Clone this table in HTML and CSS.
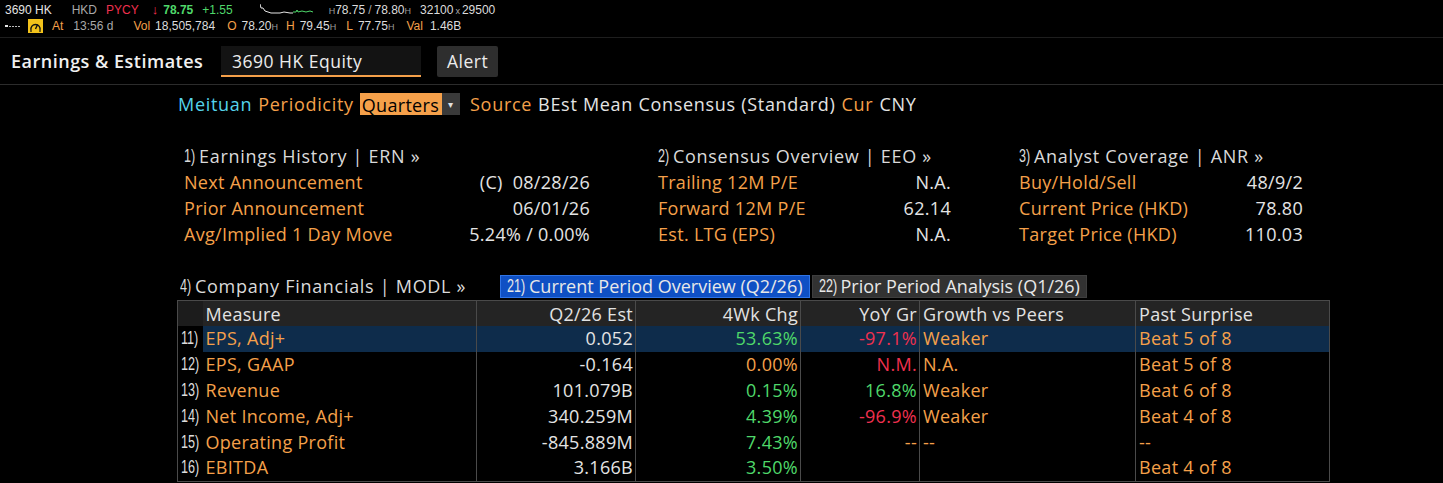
FILE: index.html
```html
<!DOCTYPE html>
<html>
<head>
<meta charset="utf-8">
<title>Earnings &amp; Estimates</title>
<link rel="stylesheet" href="styles.css">
</head>
<body>
<div class="topbar">
  <div class="tline">
    <span class="wh">3690 HK</span>
    <span class="gy m20">HKD</span>
    <span class="rd m9">PYCY</span>
    <span class="rd m13 arrow">&#8595;</span>
    <span class="gn bold m5">78.75</span>
    <span class="gn m9">+1.55</span>
    <svg class="spark m27" width="54" height="14" viewBox="0 0 54 14">
      <polyline points="0,1 1,5 3,5 5,8 8,9 11,10 20,10 24,9 30,10 33,10" fill="none" stroke="#e6e6e6" stroke-width="1"/>
      <polyline points="33,9 36,9 37,7 38,9 42,8 46,9 50,8 53,9" fill="none" stroke="#4fdb6b" stroke-width="1"/>
    </svg>
    <span class="gy m15"><span class="sm">H</span><span class="lt">78.75</span><span class="sep">/</span><span class="lt">78.80</span><span class="sm">H</span></span>
    <span class="lt m9">32100<span class="smx">x</span>29500</span>
  </div>
  <div class="tline">
    <svg class="dots" width="16" height="6" viewBox="0 0 16 6">
      <rect x="0" y="2" width="3" height="2" fill="#e6e6e6"/>
      <rect x="4" y="3" width="2" height="1" fill="#bbbbbb"/>
      <rect x="7" y="3" width="2" height="1" fill="#bbbbbb"/>
      <rect x="10" y="3" width="2" height="1" fill="#bbbbbb"/>
      <rect x="13" y="3" width="2" height="1" fill="#bbbbbb"/>
    </svg>
    <svg class="gauge m7" width="15" height="14" viewBox="0 0 15 14">
      <rect x="0" y="0" width="15" height="14" fill="#f2c21b"/>
      <path d="M3 11 A4.6 4.6 0 1 1 12 11" fill="none" stroke="#111" stroke-width="1.4"/>
      <line x1="7.5" y1="10" x2="9.6" y2="5.5" stroke="#111" stroke-width="1.4"/>
      <line x1="3" y1="11" x2="3" y2="13" stroke="#111" stroke-width="1.2"/>
      <line x1="12" y1="11" x2="12" y2="13" stroke="#111" stroke-width="1.2"/>
    </svg>
    <span class="or m9">At</span>
    <span class="gy m10">13:56 d</span>
    <span class="or m20">Vol</span>
    <span class="lt m5">18,505,784</span>
    <span class="or m12">O</span>
    <span class="lt m5">78.20<span class="sm">H</span></span>
    <span class="or m8">H</span>
    <span class="lt m5">79.45<span class="sm">H</span></span>
    <span class="or m10">L</span>
    <span class="lt m5">77.75<span class="sm">H</span></span>
    <span class="or m12">Val</span>
    <span class="lt m7">1.46B</span>
  </div>
</div>

<div class="header">
  <div class="title">Earnings &amp; Estimates</div>
  <div class="ticker">3690 HK Equity</div>
  <div class="btn">Alert</div>
</div>

<div class="content">
  <div class="meta">
    <span class="cy">Meituan</span>
    <span class="or">Periodicity</span>
    <span class="select"><span class="selval">Quarters</span><span class="caret">&#9662;</span></span>
    <span class="or sp">Source</span>
    <span class="wh">BEst Mean Consensus (Standard)</span>
    <span class="or">Cur</span>
    <span class="wh">CNY</span>
  </div>

  <div class="sections">
    <div class="sec s1">
      <div class="shead"><span class="num n1">1)</span>Earnings History | ERN &raquo;</div>
      <div class="srow"><span class="or">Next Announcement</span><span class="wh pre">(C)  08/28/26</span></div>
      <div class="srow"><span class="or">Prior Announcement</span><span class="wh">06/01/26</span></div>
      <div class="srow"><span class="or">Avg/Implied 1 Day Move</span><span class="wh">5.24% / 0.00%</span></div>
    </div>
    <div class="sec s2">
      <div class="shead"><span class="num n1">2)</span>Consensus Overview | EEO &raquo;</div>
      <div class="srow"><span class="or">Trailing 12M P/E</span><span class="wh">N.A.</span></div>
      <div class="srow"><span class="or">Forward 12M P/E</span><span class="wh">62.14</span></div>
      <div class="srow"><span class="or">Est. LTG (EPS)</span><span class="wh">N.A.</span></div>
    </div>
    <div class="sec s3">
      <div class="shead"><span class="num n1">3)</span>Analyst Coverage | ANR &raquo;</div>
      <div class="srow"><span class="or">Buy/Hold/Sell</span><span class="wh">48/9/2</span></div>
      <div class="srow"><span class="or">Current Price (HKD)</span><span class="wh">78.80</span></div>
      <div class="srow"><span class="or">Target Price (HKD)</span><span class="wh">110.03</span></div>
    </div>
  </div>

  <div class="finhead">
    <div class="fintitle"><span class="num n1">4)</span>Company Financials | MODL &raquo;</div>
    <div class="tab active"><span class="num n2">21)</span>Current Period Overview (Q2/26)</div>
    <div class="tab"><span class="num n2">22)</span>Prior Period Analysis (Q1/26)</div>
  </div>

  <table class="fin">
    <colgroup>
      <col class="c0"><col class="c1"><col class="c2"><col class="c3"><col class="c4"><col class="c5"><col class="c6">
    </colgroup>
    <thead>
      <tr>
        <th class="n"></th>
        <th class="l">Measure</th>
        <th class="r">Q2/26 Est</th>
        <th class="r">4Wk Chg</th>
        <th class="r">YoY Gr</th>
        <th class="l">Growth vs Peers</th>
        <th class="l">Past Surprise</th>
      </tr>
    </thead>
    <tbody>
      <tr class="hl">
        <td class="n"><span class="num">11)</span></td>
        <td class="l or">EPS, Adj+</td>
        <td class="r wh">0.052</td>
        <td class="r gn">53.63%</td>
        <td class="r rd">-97.1%</td>
        <td class="l or">Weaker</td>
        <td class="l or">Beat 5 of 8</td>
      </tr>
      <tr>
        <td class="n"><span class="num">12)</span></td>
        <td class="l or">EPS, GAAP</td>
        <td class="r wh">-0.164</td>
        <td class="r or">0.00%</td>
        <td class="r rd">N.M.</td>
        <td class="l or">N.A.</td>
        <td class="l or">Beat 5 of 8</td>
      </tr>
      <tr>
        <td class="n"><span class="num">13)</span></td>
        <td class="l or">Revenue</td>
        <td class="r wh">101.079B</td>
        <td class="r gn">0.15%</td>
        <td class="r gn">16.8%</td>
        <td class="l or">Weaker</td>
        <td class="l or">Beat 6 of 8</td>
      </tr>
      <tr>
        <td class="n"><span class="num">14)</span></td>
        <td class="l or">Net Income, Adj+</td>
        <td class="r wh">340.259M</td>
        <td class="r gn">4.39%</td>
        <td class="r rd">-96.9%</td>
        <td class="l or">Weaker</td>
        <td class="l or">Beat 4 of 8</td>
      </tr>
      <tr>
        <td class="n"><span class="num">15)</span></td>
        <td class="l or">Operating Profit</td>
        <td class="r wh">-845.889M</td>
        <td class="r gn">7.43%</td>
        <td class="r or">--</td>
        <td class="l or">--</td>
        <td class="l or">--</td>
      </tr>
      <tr>
        <td class="n"><span class="num">16)</span></td>
        <td class="l or">EBITDA</td>
        <td class="r wh">3.166B</td>
        <td class="r gn">3.50%</td>
        <td class="r"></td>
        <td class="l"></td>
        <td class="l or">Beat 4 of 8</td>
      </tr>
    </tbody>
  </table>
</div>
</body>
</html>
```

FILE: styles.css
```css
html, body {
  margin: 0;
  padding: 0;
  background: #000;
  height: 483px;
  overflow: hidden;
}
body {
  font-family: "Liberation Sans", Arial, sans-serif;
  color: #e6e6e6;
}

.wh { color: #e4e4e4; }
.lt { color: #dcdcdc; }
.gy { color: #a9a9a9; }
.or { color: #f5a04a; }
.rd { color: #f0304f; }
.gn { color: #4fd86a; }
.cy { color: #55d3ea; }
.bold { font-weight: bold; }
.pre { white-space: pre; }

.m5 { margin-left: 5px; }
.m7 { margin-left: 7px; }
.m8 { margin-left: 8px; }
.m9 { margin-left: 9px; }
.m10 { margin-left: 10px; }
.m12 { margin-left: 12px; }
.m13 { margin-left: 13px; }
.m15 { margin-left: 15px; }
.m20 { margin-left: 20px; }
.m27 { margin-left: 27px; }

/* top quote bar */
.topbar {
  height: 35px;
  padding-top: 2px;
  padding-left: 5px;
  font-size: 12px;
  border-bottom: 1px solid #1e1e1e;
}
.tline {
  display: flex;
  align-items: center;
  height: 16px;
  line-height: 16px;
  white-space: nowrap;
}
.arrow { font-size: 13px; }
.sm { font-size: 9px; color: #9a9a9a; }
.sep { margin: 0 3px; color: #a9a9a9; }
.smx { font-size: 9px; margin: 0 2px; color: #a9a9a9; }
.spark, .dots, .gauge { display: block; }

/* title header */
.header {
  display: flex;
  align-items: center;
  height: 46px;
  padding-left: 11px;
  border-bottom: 1px solid #2c2c2c;
  font-family: "Open Sans", "Liberation Sans", sans-serif;
}
.title {
  font-size: 18px;
  font-weight: 600;
  letter-spacing: 0.5px;
  color: #f0f0f0;
  width: 210px;
  white-space: nowrap;
}
.ticker {
  box-sizing: border-box;
  width: 200px;
  height: 31px;
  padding: 3px 0 0 11px;
  background: #131313;
  border-bottom: 2px solid #f5a04a;
  font-size: 17.5px;
  letter-spacing: 0.5px;
  color: #ececec;
}
.btn {
  margin-left: 16px;
  height: 31px;
  line-height: 31px;
  padding: 0 10px;
  background: #2e2e2e;
  border-radius: 2px;
  font-size: 17.5px;
  letter-spacing: 0.5px;
  color: #ececec;
}

/* content */
.content {
  padding-left: 176px;
  font-family: "Open Sans", "Liberation Sans", sans-serif;
  font-size: 18px;
  letter-spacing: 0.3px;
}
.meta {
  display: flex;
  align-items: center;
  gap: 6px;
  margin-top: 8px;
  padding-left: 2px;
  height: 22px;
  line-height: 22px;
  white-space: nowrap;
  letter-spacing: 0.7px;
}
.select {
  display: flex;
  height: 22px;
}
.selval {
  background: #f5a04a;
  color: #000;
  padding: 0 3px 0 2px;
  line-height: 24px;
  letter-spacing: 0.3px;
}
.caret {
  width: 18px;
  background: #3a3a3a;
  color: #e0e0e0;
  font-size: 10px;
  text-align: center;
  line-height: 22px;
}
.sp { margin-left: 4px; }

.sections {
  display: flex;
  margin-top: 28px;
  padding-left: 8px;
}
.sec { display: flex; flex-direction: column; }
.s1 { width: 406px; }
.s2 { width: 293px; margin-left: 68px; }
.s3 { width: 284px; margin-left: 68px; }
.shead, .srow {
  height: 26px;
  line-height: 26px;
  white-space: nowrap;
}
.shead {
  color: #dadada;
  letter-spacing: 0.7px;
}
.srow {
  display: flex;
  justify-content: space-between;
}

/* condensed item numbers like "1)" */
.num {
  display: inline-block;
  font-family: "Liberation Sans", sans-serif;
  font-size: 18px;
  letter-spacing: 0;
  transform: scaleX(0.7);
  transform-origin: left center;
  vertical-align: top;
}
.num.n1 { margin-right: -1px; }
.num.n2 { margin-right: -4px; }

.finhead {
  display: flex;
  align-items: center;
  margin-top: 27px;
  height: 24px;
  line-height: 24px;
  padding-left: 4px;
}
.fintitle {
  color: #dadada;
  letter-spacing: 0.7px;
  width: 320px;
  white-space: nowrap;
}
.tab {
  box-sizing: border-box;
  height: 23px;
  line-height: 21px;
  padding: 0 6px;
  background: #323232;
  color: #e8e8e8;
  font-size: 18px;
  letter-spacing: 0;
  border: 1px solid #3e3e3e;
  white-space: nowrap;
  margin-right: 2px;
}
.tab.active {
  background: #0f50c4;
  border-color: #2f74e6;
}

/* financials table */
table.fin {
  margin-top: 2px;
  margin-left: 1px;
  border-collapse: collapse;
  table-layout: fixed;
  width: 1152px;
  border: 1px solid #4a4a4a;
}
.c0 { width: 25px; }
.c1 { width: 274px; }
.c2 { width: 159px; }
.c3 { width: 165px; }
.c4 { width: 119px; }
.c5 { width: 216px; }
.c6 { width: 194px; }

.fin tr { height: 26px; }
.fin th, .fin td {
  box-sizing: border-box;
  height: 26px;
  padding: 0 0 2px 0;
  font-size: 18px;
  font-weight: normal;
  line-height: 22px;
  white-space: nowrap;
  overflow: hidden;
  border-right: 1px solid #4a4a4a;
  vertical-align: middle;
}
.fin thead tr { height: 25px; }
.fin th {
  height: 25px;
  padding-top: 2px;
  padding-bottom: 0;
  background: #242424;
  color: #e2e2e2;
}
.fin th.n { background: #1c1c1c; }
.fin .n {
  border-right: none;
  color: #dcdcdc;
  padding-left: 3px;
  text-align: left;
}
.fin .l { text-align: left; padding-left: 3px; }
.fin .r { text-align: right; padding-right: 2px; }
.fin tr.hl td { background: #0e2c4b; }
.fin tr.hl td.n { background: #000; }
```
